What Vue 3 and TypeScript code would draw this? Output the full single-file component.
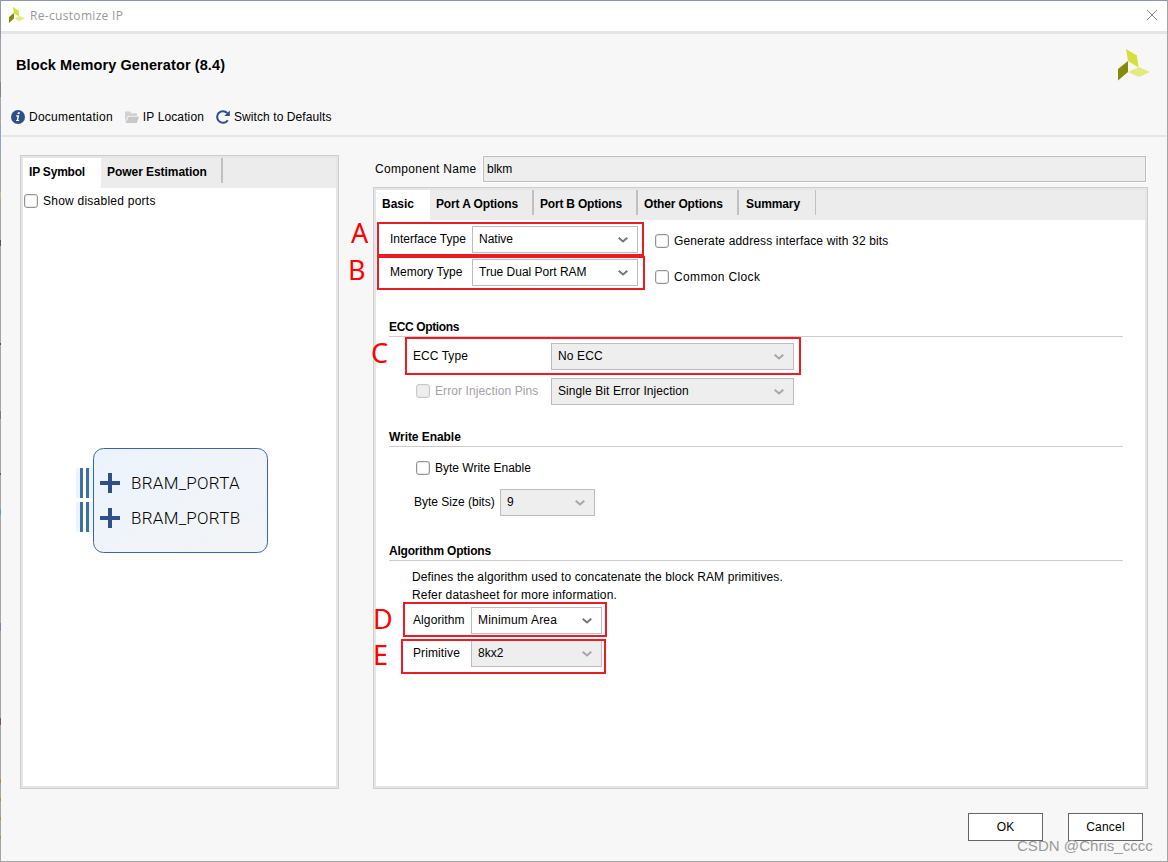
<script setup lang="ts">
interface Tab {
  label: string
  cls: string
}

const leftTabs: Tab[] = [
  { label: 'IP Symbol', cls: 'tab-symbol active' },
  { label: 'Power Estimation', cls: 'tab-power' },
]

const rightTabs: Tab[] = [
  { label: 'Basic', cls: 'tab-basic active' },
  { label: 'Port A Options', cls: 'tab-a' },
  { label: 'Port B Options', cls: 'tab-b' },
  { label: 'Other Options', cls: 'tab-other' },
  { label: 'Summary', cls: 'tab-summary' },
]

const ports: string[] = ['BRAM_PORTA', 'BRAM_PORTB']
const marks: string[] = ['A', 'B', 'C', 'D', 'E']
</script>

<template>
  <div class="window">
    <header class="titlebar">
      <svg class="mini-logo" viewBox="0 0 32 32">
        <path d="M8 0 19 7 21 19 10 13Z" fill="#d6e03d" />
        <path d="M0 20 10 12V23L0 32Z" fill="#868a0a" />
        <path d="M10 23 21 18 32 23 21 28Z" fill="#e3ea80" />
      </svg>
      <span class="title">Re-customize IP</span>
      <svg class="close" viewBox="0 0 12 12"><path d="M1 1 11 11M11 1 1 11" /></svg>
    </header>

    <section class="head">
      <div class="head-top">
        <h1>Block Memory Generator (8.4)</h1>
        <svg class="logo" viewBox="0 0 32 32">
          <path d="M8 0 19 6.5 20.500 18.500 10 12Z" fill="#d6e03d" />
          <path d="M0 20 10 12V23L0 31.500Z" fill="#868a0a" />
          <path d="M10 23 21 18 32 23 21 28Z" fill="#e3ea80" />
        </svg>
      </div>
      <nav class="toolbar">
        <svg class="ico" viewBox="0 0 14 14">
          <circle cx="7" cy="7" r="7" fill="#2f4f8a" />
          <path d="M6.900 2.300h2l-.4 1.800h-2zM5.300 5.300h2.900l-1 4.600h1.100l-.3 1.200H4.900l.3-1.200h.6l.7-3.400H5z" fill="#fff" />
        </svg>
        <span class="t-doc">Documentation</span>
        <svg class="ico folder" viewBox="0 0 14 14">
          <path d="M0 1.500h5l1.500 1.700H12V6H3L0 12z" fill="#d2d2d2" />
          <path d="M3.600 6.700H14L11.800 13H.6z" fill="#c8c8c8" />
        </svg>
        <span class="t-loc">IP Location</span>
        <svg class="ico refresh" viewBox="0 0 14 14">
          <path d="M11.800 10.200A5.800 5.800 0 1 1 11.300 3.200" fill="none" stroke="#2f4f8a" stroke-width="2" />
          <path d="M13.800.6V6H8.300z" fill="#2f4f8a" />
        </svg>
        <span class="t-switch">Switch to Defaults</span>
      </nav>
    </section>

    <main class="content">
      <aside class="panel left">
        <div class="tabs">
          <div v-for="t in leftTabs" :key="t.label" class="tab" :class="t.cls"><span>{{ t.label }}</span></div>
        </div>
        <label class="show"><i class="check"></i><span class="t-show">Show disabled ports</span></label>
        <div class="symbol">
          <div class="pins"><i v-for="p in ports" :key="p"></i></div>
          <div class="block">
            <svg class="outline" viewBox="0 0 175 105">
              <defs>
                <linearGradient id="blk" x1="0" y1="0" x2="1" y2="1">
                  <stop offset="0" stop-color="#eaf3fe" />
                  <stop offset=".5" stop-color="#f0f4f9" />
                  <stop offset="1" stop-color="#f2f3f5" />
                </linearGradient>
              </defs>
              <rect x=".5" y=".5" width="174" height="104" rx="10" fill="url(#blk)" stroke="#3c64a4" />
            </svg>
            <div v-for="p in ports" :key="p" class="port">
              <svg viewBox="0 0 20 20"><path d="M8 0h4v8h8v4h-8v8H8v-8H0V8h8z" fill="#2f4f8a" /></svg>
              <span>{{ p }}</span>
            </div>
          </div>
        </div>
      </aside>

      <div class="main">
        <div class="name-row">
          <span class="t-comp">Component Name</span>
          <div class="input">blkm</div>
        </div>
        <div class="panel right">
          <div class="tabs">
            <div v-for="t in rightTabs" :key="t.label" class="tab" :class="t.cls"><span>{{ t.label }}</span></div>
          </div>
          <div class="types">
            <div class="type-col">
              <div class="row"><span class="t-if lab">Interface Type</span><div class="combo w166"><span class="t-native">Native</span><svg viewBox="0 0 10 6"><path d="M.7 .8 5 4.500 9.300 .8" /></svg></div></div>
              <div class="row"><span class="t-mem lab">Memory Type</span><div class="combo w166"><span class="t-ram">True Dual Port RAM</span><svg viewBox="0 0 10 6"><path d="M.7 .8 5 4.500 9.300 .8" /></svg></div></div>
            </div>
            <div class="check-col">
              <label><i class="check"></i><span class="t-gen">Generate address interface with 32 bits</span></label>
              <label><i class="check"></i><span class="t-clk">Common Clock</span></label>
            </div>
          </div>

          <h2 class="h-ecc"><span>ECC Options</span></h2>
          <div class="row ecc"><span class="t-ecc">ECC Type</span><div class="combo w243 off"><span class="t-noecc">No ECC</span><svg viewBox="0 0 10 6"><path d="M.7 .8 5 4.500 9.300 .8" /></svg></div></div>
          <div class="row inj"><label class="dim"><i class="check"></i><span class="t-err">Error Injection Pins</span></label><div class="combo w243 off"><span class="t-single">Single Bit Error Injection</span><svg viewBox="0 0 10 6"><path d="M.7 .8 5 4.500 9.300 .8" /></svg></div></div>

          <h2 class="h-write"><span>Write Enable</span></h2>
          <label class="byte"><i class="check"></i><span class="t-byte">Byte Write Enable</span></label>
          <div class="row size"><span class="t-size">Byte Size (bits)</span><div class="combo w95 off"><span>9</span><svg viewBox="0 0 10 6"><path d="M.7 .8 5 4.500 9.300 .8" /></svg></div></div>

          <h2 class="h-alg"><span>Algorithm Options</span></h2>
          <p><span class="t-def">Defines the algorithm used to concatenate the block RAM primitives.</span><br><span class="t-ref">Refer datasheet for more information.</span></p>
          <div class="row alg"><span class="t-alg">Algorithm</span><div class="combo w131"><span class="t-min">Minimum Area</span><svg viewBox="0 0 10 6"><path d="M.7 .8 5 4.500 9.300 .8" /></svg></div></div>
          <div class="row prim"><span class="t-prim">Primitive</span><div class="combo w131 off"><span class="t-8k">8kx2</span><svg viewBox="0 0 10 6"><path d="M.7 .8 5 4.500 9.300 .8" /></svg></div></div>
        </div>
      </div>
    </main>

    <footer>
      <button>OK</button>
      <button>Cancel</button>
    </footer>

    <template v-for="m in marks" :key="m">
      <div class="box" :class="'box-' + m"></div>
      <span class="mark" :class="'mark-' + m">{{ m }}</span>
    </template>
    <span class="watermark">CSDN @Chris_cccc</span>
  </div>
</template>

<style>
body { margin: 0; overflow: hidden; }
</style>

<style scoped>
* { box-sizing: border-box; }
.window {
  position: relative;
  width: 1168px;
  height: 862px;
  border: 1px solid #a5a5a5;
  border-top-color: #8f97a9;
  background: #f7f7f7;
  font: 12px/16px "Liberation Sans", Arial, sans-serif;
  color: #000;
  white-space: nowrap;
  display: flex;
  flex-direction: column;
}
/* Sliver of the desktop showing beside the left window edge. */
.window::before {
  content: "";
  position: absolute;
  left: -1px;
  top: 0;
  width: 1px;
  height: 860px;
  background: linear-gradient(#8f97a9 0 38px, #a5a5a5 38px 81px, #858585 81px 96px, #a5a5a5 96px 120px, #c0a878 120px 122px, #93a2c0 122px 154px, #a5a5a5 154px 191px, #c5b38f 191px 198px, #a5a5a5 198px 239px, #5f5348 239px 245px, #a5a5a5 245px 342px, #4a4a6a 342px 344px, #a5a5a5 344px 410px, #7c7c7c 410px 418px, #a5a5a5 418px 472px, #3a5fae 472px 474px, #a5a5a5 474px 508px, #5a9fc8 508px 514px, #a5a5a5 514px 622px, #8a7bb5 622px 630px, #a5a5a5 630px 717px, #7d5252 717px 724px, #a5a5a5 724px 778px, #b48a3c 778px 782px, #a5a5a5 782px 797px, #b48a3c 797px 800px, #a5a5a5 800px 816px, #b48a3c 816px 819px, #a5a5a5 819px 835px, #b48a3c 835px 838px, #a5a5a5 838px);
}
svg { display: block; flex: none; }
.titlebar { height: 33px; flex: none; display: flex; align-items: flex-start; background: #fff; border-bottom: 3px solid #e6e6e6; padding: 6px 9px 0 8px; }
.mini-logo { width: 16px; height: 16px; }
.title { font: 12px/16px "Open Sans", "Noto Sans", sans-serif; color: #999; margin: 1px 0 0 5px; letter-spacing: .32px; }
.close { width: 12px; height: 12px; margin: 2px 0 0 auto; stroke: #888; stroke-width: 1; fill: none; }
.head { height: 103px; flex: none; border-bottom: 2px solid #e6e6e6; display: flex; flex-direction: column; }
.head-top { display: flex; justify-content: space-between; padding: 15px 17px 0 15px; height: 75px; }
h1 { margin: 8px 0 0; font: bold 14px/16px "Liberation Sans", Arial, sans-serif; font-size: 14.500px; letter-spacing: .1px; }
.logo { width: 32px; height: 32px; }
.toolbar { display: flex; align-items: center; height: 16px; padding-left: 10px; }
.ico { width: 14px; height: 14px; margin-right: 4px; }
.folder { margin-left: 12px; }
.refresh { margin-left: 12px; }
.t-doc { letter-spacing: .24px; }
.t-loc { letter-spacing: .12px; }
.t-switch { letter-spacing: .08px; }
.content { height: 652px; flex: none; display: flex; padding-left: 19px; }
.panel { border: 1px solid #cdcdcd; background: #fff; box-shadow: inset 0 0 0 2px #e6e6e6; padding: 2px; display: flex; flex-direction: column; }
.left { width: 319px; height: 634px; margin-top: 18px; }
.main { margin: 18px 0 0 34px; width: 775px; }
.right { width: 775px; height: 602px; margin-top: 5px; }
.tabs { height: 30px; flex: none; background: #ececec; display: flex; font-weight: bold; }
.tab { height: 25px; line-height: 29px; border-right: 2px solid #c0c0c0; padding-left: 6px; }
.tab.active { background: #fff; height: 30px; border: 0; }
.tab-symbol { width: 78px; letter-spacing: -.2px; }
.tab-power { width: 122px; letter-spacing: -.05px; }
.tab-basic { width: 54px; }
.tab-a { width: 104px; letter-spacing: -.13px; }
.tab-b { width: 104px; letter-spacing: -.2px; }
.tab-other { width: 101px; letter-spacing: -.15px; }
.tab-summary { width: 77px; border-right-width: 1px; padding-left: 7px; letter-spacing: -.1px; }
label { display: flex; align-items: center; gap: 5px; height: 14px; }
.check { width: 14px; height: 14px; border: 1px solid #959595; border-radius: 3px; background: #fff; flex: none; box-shadow: inset 0 0 0 1px #e8e8e8; }
.show { margin: 6px 0 0 1px; }
.t-show { letter-spacing: .24px; }
.symbol { display: flex; margin: 240px 0 0 53px; }
.pins { width: 17px; padding-top: 20px; display: flex; flex-direction: column; gap: 4px; }
.pins i { display: block; height: 30px; background: linear-gradient(90deg, #ecf4fd 4px, #3d70a3 4px 7px, #fff 7px 10px, #3d70a3 10px 13px, #ecf4fd 13px); }
.block { position: relative; width: 175px; height: 105px; padding: 25px 0 0 7px; display: flex; flex-direction: column; gap: 15px; }
.outline { position: absolute; left: 0; top: 0; width: 175px; height: 105px; }
.port { position: relative; display: flex; align-items: center; gap: 11px; height: 20px; font: 300 17px/20px Roboto, "Liberation Sans", sans-serif; letter-spacing: .28px; }
.port:last-child span { margin-top: -1px; }
.port svg { width: 20px; height: 20px; }
.name-row { display: flex; align-items: center; height: 27px; padding-left: 2px; }
.t-comp { letter-spacing: .3px; }
.input { margin-left: auto; margin-right: 2px; width: 663px; height: 26px; border: 1px solid #bdbdbd; background: #eee; padding-left: 3px; line-height: 24px; box-shadow: 0 0 0 1px #fff; }
.types { display: flex; height: 94px; flex: none; padding-top: 6px; }
.type-col { width: 279px; padding-left: 14px; display: flex; flex-direction: column; gap: 6px; }
.check-col { padding-top: 8px; display: flex; flex-direction: column; gap: 22px; }
.t-gen { letter-spacing: .145px; }
.t-clk { letter-spacing: .36px; }
.row { display: flex; height: 27px; flex: none; }
.row > span { line-height: 26px; flex: none; }
.lab { width: 82px; }
.combo { border: 1px solid #bdbdbd; background: #fff; padding: 0 9px 0 6px; height: 27px; line-height: 24px; display: flex; justify-content: space-between; }
.combo svg { width: 10px; height: 6px; margin-top: 10px; fill: none; stroke: #777; stroke-width: 2; }
.combo.off { background: #eee; }
.combo.off svg { stroke: #a6a6a6; }
.w166 { width: 166px; }
.w243 { width: 243px; }
.w95 { width: 95px; }
.w131 { width: 131px; }
h2 { font: bold 12px/16px "Liberation Sans", Arial, sans-serif; height: 18px; flex: none; margin: 0 22px 0 13px; border-bottom: 1px solid #ccc; }
.h-ecc { margin-top: 5px; letter-spacing: -.36px; }
.ecc { margin: 6px 0 0 37px; }
.t-ecc { width: 138px; letter-spacing: .05px; }
.t-noecc { letter-spacing: .15px; }
.inj { margin: 8px 0 0 40px; }
.inj label { width: 135px; height: 26px; }
.t-err { letter-spacing: .1px; }
.t-single { letter-spacing: .08px; }
.dim { color: #a3a3a3; }
.dim .check { border-color: #c9c9c9; background: #eee; }
.h-write { margin-top: 24px; letter-spacing: -.06px; }
.byte { margin: 14px 0 0 40px; }
.size { margin: 14px 0 0 38px; }
.t-size { width: 86px; }
.h-alg { margin-top: 27px; letter-spacing: -.2px; }
p { margin: 7px 0 0 36px; line-height: 18px; }
.t-def { letter-spacing: .11px; }
.t-ref { letter-spacing: .15px; }
.alg { margin: 3px 0 0 37px; }
.t-alg, .t-prim { width: 58px; letter-spacing: .1px; }
.t-min { letter-spacing: .2px; }
.prim { margin: 6px 0 0 37px; }
footer { display: flex; justify-content: flex-end; gap: 25px; padding: 24px 24px 0 0; }
button { width: 75px; height: 28px; padding: 0; border: 1px solid #666; border-radius: 0; background: #fff; font: 12px/16px "Liberation Sans", Arial, sans-serif; color: #000; letter-spacing: .2px; }
.box { position: absolute; border: 2px solid #ed1c24; }
.box-A { left: 376px; top: 221px; width: 267px; height: 34px; }
.box-B { left: 376px; top: 255px; width: 268px; height: 34px; }
.box-C { left: 404px; top: 336px; width: 396px; height: 38px; }
.box-D { left: 402px; top: 601px; width: 204px; height: 35px; }
.box-E { left: 400px; top: 638px; width: 205px; height: 35px; }
.mark { position: absolute; font: 27px/30px "Noto Sans", "Open Sans", sans-serif; color: #f00; }
.mark-A { left: 350px; top: 217px; }
.mark-B { left: 347px; top: 254px; }
.mark-C { left: 370px; top: 337px; }
.mark-D { left: 372px; top: 603px; }
.mark-E { left: 372px; top: 639px; }
.watermark { position: absolute; left: 1016px; top: 835px; font-size: 15px; line-height: 20px; color: #9a9a9a; letter-spacing: .04px; }
</style>
